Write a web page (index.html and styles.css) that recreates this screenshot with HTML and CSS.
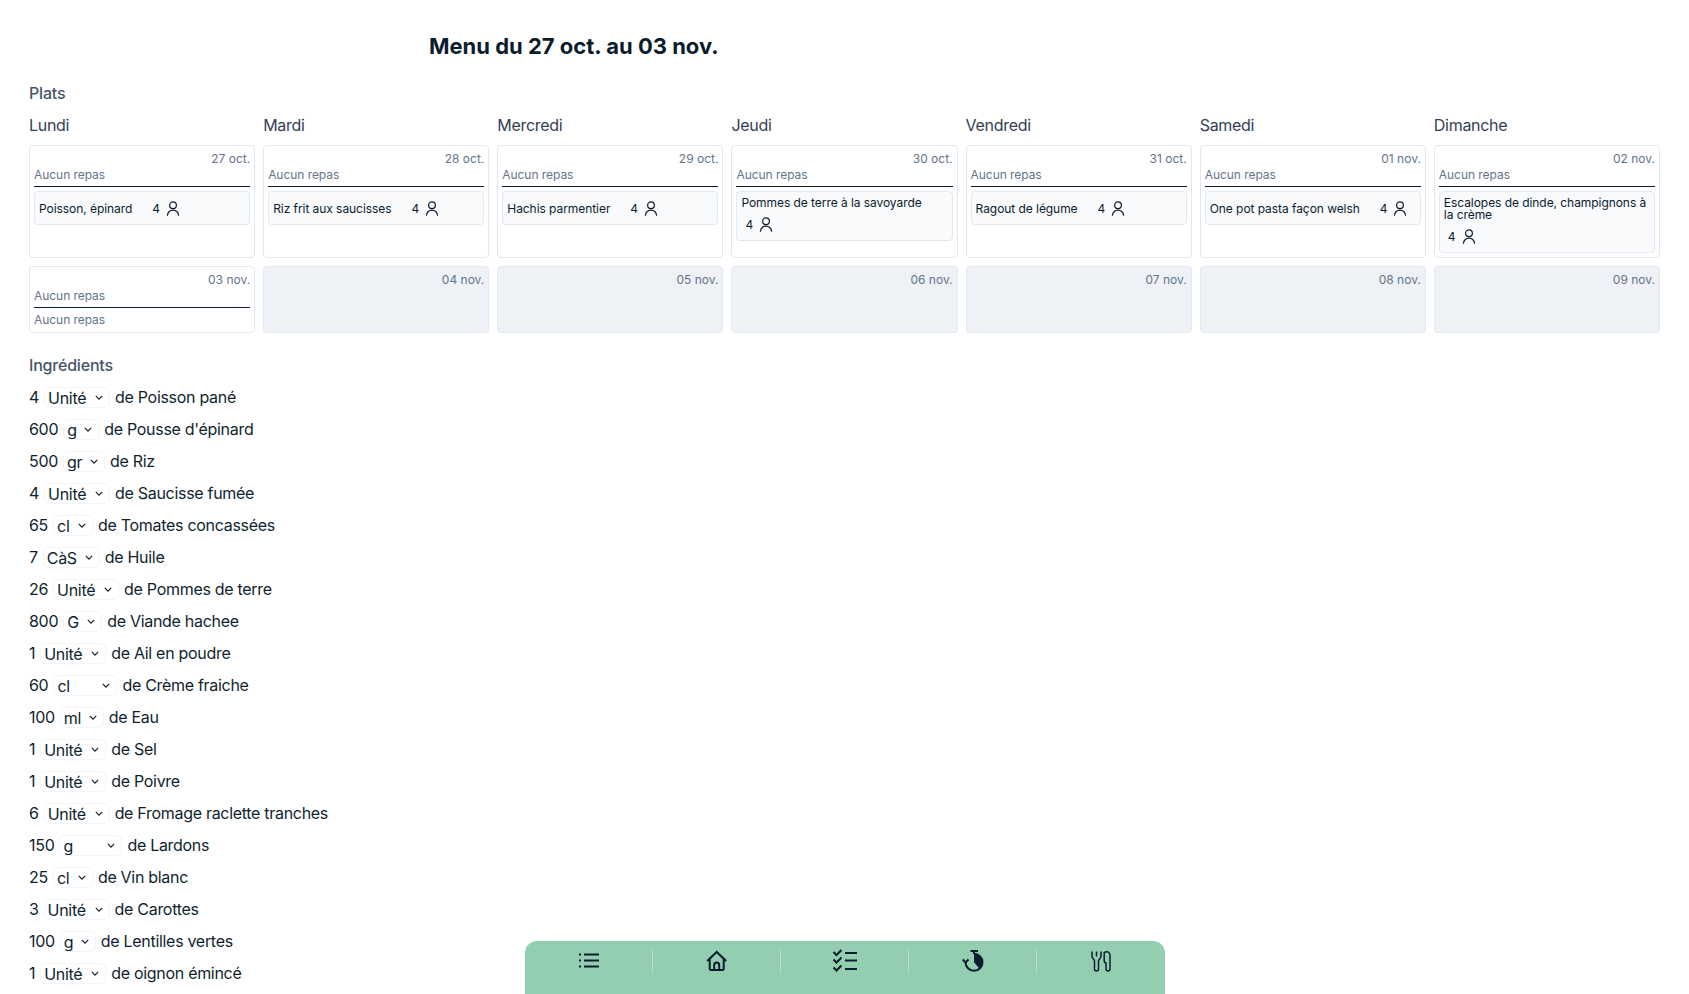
FILE: index.html
```html
<!DOCTYPE html>
<html lang="fr">
<head>
    <meta charset="UTF-8">
    <meta name="viewport" content="width=device-width, initial-scale=1.0">
    <title>Menu</title>
    <link rel="stylesheet" href="styles.css">
</head>
<body>
    <main class="page">
        <h1 class="title">Menu du 27 oct. au 03 nov.</h1>
        <h2 class="section">Plats</h2>

        <div class="calendar">
            <div class="weekday">Lundi</div>
            <div class="weekday">Mardi</div>
            <div class="weekday">Mercredi</div>
            <div class="weekday">Jeudi</div>
            <div class="weekday">Vendredi</div>
            <div class="weekday">Samedi</div>
            <div class="weekday">Dimanche</div>

            <div class="day">
                <div class="date">27 oct.</div>
                <div class="empty noon">Aucun repas</div>
                <div class="dish"><span class="dish-name">Poisson, épinard</span><span class="people">4 <svg viewBox="0 0 24 24"><circle cx="12" cy="7" r="4.500"/><path d="M4.500 21a7.500 7.500 0 0 1 15 0"/></svg></span></div>
            </div>
            <div class="day">
                <div class="date">28 oct.</div>
                <div class="empty noon">Aucun repas</div>
                <div class="dish"><span class="dish-name">Riz frit aux saucisses</span><span class="people">4 <svg viewBox="0 0 24 24"><circle cx="12" cy="7" r="4.500"/><path d="M4.500 21a7.500 7.500 0 0 1 15 0"/></svg></span></div>
            </div>
            <div class="day">
                <div class="date">29 oct.</div>
                <div class="empty noon">Aucun repas</div>
                <div class="dish"><span class="dish-name">Hachis parmentier</span><span class="people">4 <svg viewBox="0 0 24 24"><circle cx="12" cy="7" r="4.500"/><path d="M4.500 21a7.500 7.500 0 0 1 15 0"/></svg></span></div>
            </div>
            <div class="day">
                <div class="date">30 oct.</div>
                <div class="empty noon">Aucun repas</div>
                <div class="dish wrapped"><span class="dish-name">Pommes de terre à la savoyarde</span><span class="people">4 <svg viewBox="0 0 24 24"><circle cx="12" cy="7" r="4.500"/><path d="M4.500 21a7.500 7.500 0 0 1 15 0"/></svg></span></div>
            </div>
            <div class="day">
                <div class="date">31 oct.</div>
                <div class="empty noon">Aucun repas</div>
                <div class="dish"><span class="dish-name">Ragout de légume</span><span class="people">4 <svg viewBox="0 0 24 24"><circle cx="12" cy="7" r="4.500"/><path d="M4.500 21a7.500 7.500 0 0 1 15 0"/></svg></span></div>
            </div>
            <div class="day">
                <div class="date">01 nov.</div>
                <div class="empty noon">Aucun repas</div>
                <div class="dish"><span class="dish-name">One pot pasta façon welsh</span><span class="people">4 <svg viewBox="0 0 24 24"><circle cx="12" cy="7" r="4.500"/><path d="M4.500 21a7.500 7.500 0 0 1 15 0"/></svg></span></div>
            </div>
            <div class="day">
                <div class="date">02 nov.</div>
                <div class="empty noon">Aucun repas</div>
                <div class="dish wrapped"><span class="dish-name">Escalopes de dinde, champignons à la crème</span><span class="people">4 <svg viewBox="0 0 24 24"><circle cx="12" cy="7" r="4.500"/><path d="M4.500 21a7.500 7.500 0 0 1 15 0"/></svg></span></div>
            </div>

            <div class="day">
                <div class="date">03 nov.</div>
                <div class="empty noon">Aucun repas</div>
                <div class="empty">Aucun repas</div>
            </div>
            <div class="day off"><div class="date">04 nov.</div></div>
            <div class="day off"><div class="date">05 nov.</div></div>
            <div class="day off"><div class="date">06 nov.</div></div>
            <div class="day off"><div class="date">07 nov.</div></div>
            <div class="day off"><div class="date">08 nov.</div></div>
            <div class="day off"><div class="date">09 nov.</div></div>
        </div>

        <h2 class="section ingredients-title">Ingrédients</h2>
        <ul class="ingredients">
            <li>4 <select class="w-unite"><option>Unité</option></select> de Poisson pané</li>
            <li>600 <select class="w-g"><option>g</option></select> de Pousse d'épinard</li>
            <li>500 <select class="w-gr"><option>gr</option></select> de Riz</li>
            <li>4 <select class="w-unite"><option>Unité</option></select> de Saucisse fumée</li>
            <li>65 <select class="w-cl"><option>cl</option></select> de Tomates concassées</li>
            <li>7 <select class="w-cas"><option>CàS</option></select> de Huile</li>
            <li>26 <select class="w-unite"><option>Unité</option></select> de Pommes de terre</li>
            <li>800 <select class="w-gg"><option>G</option></select> de Viande hachee</li>
            <li>1 <select class="w-unite"><option>Unité</option></select> de Ail en poudre</li>
            <li>60 <select class="w-wide"><option>cl</option></select> de Crème fraiche</li>
            <li>100 <select class="w-ml"><option>ml</option></select> de Eau</li>
            <li>1 <select class="w-unite"><option>Unité</option></select> de Sel</li>
            <li>1 <select class="w-unite"><option>Unité</option></select> de Poivre</li>
            <li>6 <select class="w-unite"><option>Unité</option></select> de Fromage raclette tranches</li>
            <li>150 <select class="w-wider"><option>g</option></select> de Lardons</li>
            <li>25 <select class="w-cl"><option>cl</option></select> de Vin blanc</li>
            <li>3 <select class="w-unite"><option>Unité</option></select> de Carottes</li>
            <li>100 <select class="w-g"><option>g</option></select> de Lentilles vertes</li>
            <li>1 <select class="w-unite"><option>Unité</option></select> de oignon émincé</li>
        </ul>
    </main>

    <nav class="tabbar">
        <a class="tab"><svg viewBox="0 0 24 24"><path d="M8 5.500h15M8 11.500h15M8 17.500h15"/><path d="M3 5.500h2M3 11.500h2M3 17.500h2"/></svg></a>
        <a class="tab"><svg viewBox="0 0 24 24"><path d="M3.200 12l9.500-9 9.500 9"/><path d="M5.700 10v9.500A1.500 1.500 0 0 0 7.200 21h11a1.500 1.500 0 0 0 1.500-1.500V10"/><path d="M10.200 21v-5a2.500 2.500 0 0 1 5 0v5"/></svg></a>
        <a class="tab"><svg viewBox="0 0 24 24"><path d="M12 4h12M12 11.500h12M12 20h12"/><path d="m.5 3 3 3 5-5M.5 10.500l3 3 5-5M.5 18.500l3 3 5-5"/></svg></a>
        <a class="tab"><svg viewBox="0 0 24 24"><path d="M9.500 2H17M13 2v3"/><path d="M13 4.800a8.500 8.500 0 1 1-8.500 8.500"/><path d="m1.800 10.500 2.700 3 3-3"/><path class="solid" d="M13 4.800a8.500 8.500 0 0 1 5.500 15l-5.500-6.500z"/></svg></a>
        <a class="tab cutlery"><svg viewBox="0 0 24 24"><path d="M3 2.500V7c0 2.500 2.500 3.200 2.500 5v8a2 2 0 0 0 4 0v-8c0-1.800 2.500-2.500 2.500-5V2.500"/><path d="M7.500 2.500v5"/><path d="M15.200 3.500c3.300-1.500 5.800-.5 5.800 3V20a2 2 0 0 1-4 0v-6c-1.300 0-1.800-1-1.800-2.500z"/></svg></a>
    </nav>
</body>
</html>
```

FILE: styles.css
```css
* {
    box-sizing: border-box;
}
body {
    margin: 0;
    font-family: Inter, "Noto Sans", sans-serif;
    color: #0f1f2e;
    background-color: white;
}
.page {
    padding: 30px 29px 0;
    height: 994px;
    overflow: hidden;
}
.title {
    margin: 0;
    padding-left: 400px;
    font-size: 22px;
    line-height: 32px;
    font-weight: 700;
    color: #0b1c2c;
}
.section {
    margin: 19px 0 0;
    font-size: 16px;
    line-height: 24px;
    font-weight: 500;
    letter-spacing: -0.2px;
    color: #475569;
}
.calendar {
    display: grid;
    grid-template-columns: repeat(7, 1fr);
    gap: 8px;
    margin-top: 8px;
    width: 1631px;
}
.weekday {
    font-size: 16px;
    line-height: 24px;
    letter-spacing: -0.3px;
    color: #334155;
}
.day {
    border: 1px solid #e2e8f0;
    border-radius: 4px;
    padding: 5px 4px 4px;
    background-color: white;
}
.day.off {
    background-color: #eef1f6;
}
.date {
    text-align: right;
    font-size: 12px;
    line-height: 16px;
    color: #64748b;
}
.empty {
    font-size: 12px;
    line-height: 16px;
    letter-spacing: -0.05px;
    color: #64748b;
}
.empty.noon {
    border-bottom: 1px solid #0b1c2c;
    padding-bottom: 3px;
    margin-bottom: 4px;
}
.dish {
    display: flex;
    flex-wrap: wrap;
    align-items: center;
    column-gap: 20px;
    padding: 5px 4px 3px;
    font-size: 12px;
    line-height: 12px;
    letter-spacing: -0.06px;
    color: #0b1c2c;
    background-color: #f8fafc;
    border: 1px solid #e2e8f0;
    border-radius: 4px;
}
.dish-name {
    display: block;
}
.dish.wrapped .people {
    padding-left: 4px;
    margin-top: 4px;
}
.people {
    display: inline-flex;
    align-items: center;
    gap: 4px;
    height: 24px;
}
.people svg {
    width: 18px;
    height: 18px;
    fill: none;
    stroke: #0b1c2c;
    stroke-width: 1.600;
}
.ingredients-title {
    margin-top: 20px;
}
.ingredients {
    list-style: none;
    margin: 4px 0 0;
    padding: 0;
}
.ingredients li {
    height: 32px;
    display: flex;
    align-items: center;
    gap: 5px;
    font-size: 16px;
    letter-spacing: -0.3px;
    white-space: nowrap;
    color: #0f1f2e;
}
.ingredients select {
    appearance: none;
    height: 21px;
    padding: 0 0 0 3px;
    font: inherit;
    letter-spacing: inherit;
    color: inherit;
    border: 1px solid #f1f5f9;
    border-radius: 5px;
    background-color: white;
    background-image: url("data:image/svg+xml,%3Csvg xmlns='http://www.w3.org/2000/svg' viewBox='0 0 10 6'%3E%3Cpath d='M1 1l4 4 4-4' fill='none' stroke='%230f1f2e' stroke-width='1.500'/%3E%3C/svg%3E");
    background-size: 8px 5px;
    background-repeat: no-repeat;
    background-position: calc(100% - 6px) center;
}
.w-unite { width: 66px; }
.w-g { width: 36px; }
.w-gr { width: 42px; }
.w-gg { width: 39px; }
.w-cl { width: 40px; }
.w-cas { width: 57px; }
.w-wide { width: 64px; }
.w-ml { width: 44px; }
.w-wider { width: 63px; }
.tabbar {
    position: fixed;
    left: 0;
    right: 0;
    bottom: 0;
    width: 640px;
    height: 53px;
    margin: 0 auto;
    display: flex;
    padding-top: 8px;
    background-color: #94ceb0;
    border-radius: 12px 12px 0 0;
}
.tab {
    flex: 1;
    height: 24px;
    display: flex;
    align-items: center;
    justify-content: center;
    border-left: 1px solid #b9dccb;
}
.tab:first-child {
    border-left: none;
}
.tab svg {
    width: 24px;
    height: 24px;
    fill: none;
    stroke: #0b1c2c;
    stroke-width: 2;
    overflow: visible;
}
.tab .solid {
    fill: #0b1c2c;
    stroke: none;
}
.tab.cutlery svg {
    stroke-width: 1.500;
}
```
